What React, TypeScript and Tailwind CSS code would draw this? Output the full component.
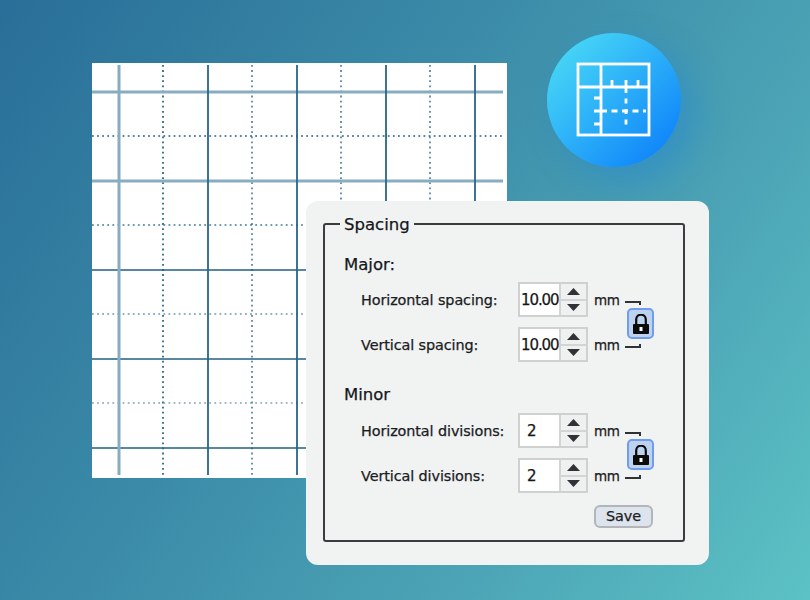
import React from "react";

const font = { fontFamily: '"DejaVu Sans", "Noto Sans", sans-serif' };

function Arrow({ up }: { up?: boolean }) {
  return (
    <svg width="13" height="7" viewBox="0 0 13 7" className="block">
      <path d={up ? "M6.5 0 L13 7 L0 7 Z" : "M0 0 L13 0 L6.5 7 Z"} fill="#2f3335" />
    </svg>
  );
}

function Spinner({ value, pad }: { value: string; pad: string }) {
  return (
    <div className="flex h-[35px] w-[70px] border-2 border-[#cfd1d1] bg-white">
      <div className={`flex flex-1 items-center pt-[1px] text-[15px] tracking-[-1.1px] text-[#161616] ${pad}`}>{value}</div>
      <div className="flex w-[27px] flex-col border-l-2 border-[#d3d5d5] bg-[#eff0f0]">
        <div className="flex flex-1 items-center justify-center border-b-2 border-[#d3d5d5]">
          <Arrow up />
        </div>
        <div className="flex flex-1 items-center justify-center">
          <Arrow />
        </div>
      </div>
    </div>
  );
}

function Row({ label, value, pad }: { label: string; value: string; pad: string }) {
  return (
    <div className="flex items-center">
      <div className="mt-[2px] w-[157px] text-[14.4px] tracking-[-0.1px] text-[#1a1c1e]">{label}</div>
      <Spinner value={value} pad={pad} />
      <div className="ml-[6px] mt-[2px] w-[31px] text-[13.5px] tracking-[-0.3px] text-[#1a1c1e]">mm</div>
    </div>
  );
}

function LockIcon() {
  return (
    <svg width="18" height="20" viewBox="0 0 18 20">
      <path d="M4.2 11 V5.5 a4.8 4.8 0 0 1 9.6 0 V11" fill="none" stroke="#0b0b0b" strokeWidth="2.2" />
      <rect x="1" y="10" width="16" height="10" rx="1" fill="#0b0b0b" />
      <rect x="7.5" y="13" width="3" height="4" fill="#ffffff" />
    </svg>
  );
}

function LinkedRows({ rows, pad }: { rows: { label: string; value: string }[]; pad: string }) {
  return (
    <div className="flex items-center pl-[36px]">
      <div className="flex flex-col gap-[10px]">
        {rows.map((r) => (
          <Row key={r.label} label={r.label} value={r.value} pad={pad} />
        ))}
      </div>
      <div className="flex w-[28px] flex-col items-start pt-[5px]">
        <div className="h-[4px] w-[16px] border-r-2 border-t-2 border-[#2f3335]" />
        <div className="ml-[2px] mt-[3px] flex h-[31px] w-[27px] items-center justify-center rounded-[5px] border-2 border-[#6f9bf2] bg-[#bdd2ee]">
          <LockIcon />
        </div>
        <div className="mt-[5px] h-[4px] w-[16px] border-b-2 border-r-2 border-[#2f3335]" />
      </div>
    </div>
  );
}

function GridDrawing() {
  const thickV = [119];
  const thinV = [208, 297, 386, 475];
  const thickH = [92, 181];
  const thinH = [270, 359, 448];
  const dotV: [number, string][] = [[163, "#1f5f82"], [252, "#4f8299"], [341, "#4f8299"], [430, "#4f8299"]];
  const dotH: [number, string][] = [[136, "#1f5f82"], [225, "#3f7896"], [314, "#6f97ac"], [403, "#7fa3b6"]];
  return (
    <svg width="415" height="415" viewBox="92 63 415 415" className="block">
      {dotV.map(([x, c]) => (
        <line key={x} x1={x} x2={x} y1="65" y2="475" stroke={c} strokeWidth="1.7" strokeDasharray="1.8 3.3" />
      ))}
      {dotH.map(([y, c]) => (
        <line key={y} x1="92" x2="503" y1={y} y2={y} stroke={c} strokeWidth="1.7" strokeDasharray="1.8 3.3" />
      ))}
      {thickH.map((y) => (
        <line key={y} x1="92" x2="503" y1={y} y2={y} stroke="#88adc1" strokeWidth="3" />
      ))}
      {thinH.map((y) => (
        <line key={y} x1="92" x2="503" y1={y} y2={y} stroke="#1f5f82" strokeWidth="1.6" />
      ))}
      {thickV.map((x) => (
        <line key={x} x1={x} x2={x} y1="65" y2="475" stroke="#88adc1" strokeWidth="3" />
      ))}
      {thinV.map((x) => (
        <line key={x} x1={x} x2={x} y1="65" y2="475" stroke="#28658a" strokeWidth="1.8" />
      ))}
    </svg>
  );
}

function BadgeIcon() {
  return (
    <svg width="78" height="78" viewBox="575 61 78 78" className="block" fill="none" stroke="#fff" strokeWidth="2.8">
      <rect x="578" y="64" width="71" height="71" />
      <path d="M601 64 V135 M578 87 H649" />
      <path d="M612 80 V87 M626 80 V87 M638 80 V87" />
      <path d="M594 98 H601 M594 111 H601 M594 124 H601" />
      <path d="M626 88 V129" strokeDasharray="5 5.5" />
      <path d="M601 111 H646" strokeDasharray="6 4.5" />
    </svg>
  );
}

export default function App() {
  return (
    <div
      className="relative h-[600px] w-[810px] overflow-hidden bg-[linear-gradient(125deg,#296e98_0%,#3b8ba8_40%,#4ba3b5_70%,#5cc2c5_100%)] [-webkit-text-stroke:0.25px]"
      style={font}
    >
      <div className="absolute left-[92px] top-[63px] bg-white">
        <GridDrawing />
      </div>

      <div className="absolute left-[547px] top-[33px] flex h-[134px] w-[134px] items-center justify-center rounded-full bg-[linear-gradient(135deg,#4bdcf5_5%,#2fb4f8_45%,#0a7efa_95%)] shadow-[14px_14px_36px_rgba(10,120,240,0.3)]">
        <BadgeIcon />
      </div>

      <div className="absolute left-[306px] top-[201px] h-[364px] w-[403px] rounded-[12px] bg-[#f1f2f2] pl-[17px] pt-[11px]">
        <fieldset className="h-[330px] w-[362px] rounded-[3px] border-2 border-[#3a3d3f] pt-[18px]">
          <legend className="ml-[15px] px-[4px] text-[16.5px] leading-[23px] text-[#14171a]">
            <span className="relative top-px">Spacing</span>
          </legend>
          <div className="pl-[19px] text-[16.5px] leading-[23px] text-[#14171a]">Major:</div>
          <div className="mt-[6px]">
            <LinkedRows
              pad="pl-[1px]"
              rows={[
                { label: "Horizontal spacing:", value: "10.00" },
                { label: "Vertical spacing:", value: "10.00" },
              ]}
            />
          </div>
          <div className="mt-[21px] pl-[19px] text-[16.5px] leading-[23px] text-[#14171a]">Minor</div>
          <div className="mt-[7px]">
            <LinkedRows
              pad="pl-[7px]"
              rows={[
                { label: "Horizontal divisions:", value: "2" },
                { label: "Vertical divisions:", value: "2" },
              ]}
            />
          </div>
          <div className="mt-[12px] flex justify-end pr-[30px]">
            <button className="flex h-[23px] w-[59px] items-center justify-center rounded-[6px] border-2 border-[#b3b6b9] bg-[#dde4ee] text-[14.4px] tracking-[-0.1px] text-[#1a1c1e]">
              Save
            </button>
          </div>
        </fieldset>
      </div>
    </div>
  );
}
